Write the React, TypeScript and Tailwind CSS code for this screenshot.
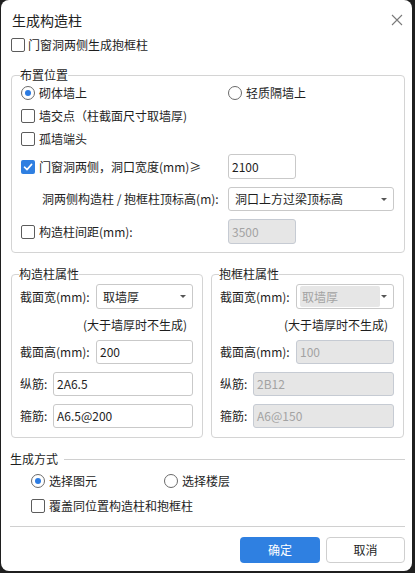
import React from "react";

const font = { fontFamily: '"Noto Sans CJK SC", "Noto Sans", sans-serif' };

function Checkbox({ checked = false }: { checked?: boolean }) {
  if (checked) {
    return (
      <span className="w-[14px] h-[14px] shrink-0 rounded-[2px] bg-[#2f7fe1] flex items-center justify-center">
        <svg width="10" height="10" viewBox="0 0 10 10">
          <path d="M1.5 5.2 L4 7.6 L8.6 2.4" fill="none" stroke="#fff" strokeWidth="1.6" strokeLinecap="round" strokeLinejoin="round" />
        </svg>
      </span>
    );
  }
  return <span className="w-[14px] h-[14px] shrink-0 rounded-[2px] border border-[#5c5c5c] bg-white" />;
}

function Radio({ checked = false }: { checked?: boolean }) {
  return (
    <span className="w-[14px] h-[14px] shrink-0 rounded-full border border-[#6a6a6a] bg-white flex items-center justify-center">
      {checked && <span className="w-[6px] h-[6px] rounded-full bg-[#2b7be2]" />}
    </span>
  );
}

function Arrow() {
  return <span className="w-0 h-0 border-l-[3px] border-r-[3px] border-t-[3px] border-l-transparent border-r-transparent border-t-[#555]" />;
}

function Input({ value, disabled = false, cls }: { value: string; disabled?: boolean; cls: string }) {
  return (
    <div
      className={
        "h-full flex items-center pl-[3px] rounded-[3px] border text-[12px] " +
        (disabled ? "bg-[#e6e6e6] border-[#c6cbd3] text-[#a3a3a3] " : "bg-white border-[#c9c9c9] text-[#1e1e1e] ") +
        cls
      }
    >
      {value}
    </div>
  );
}

function Select({ value, disabled = false, cls }: { value: string; disabled?: boolean; cls: string }) {
  return (
    <div className={"h-full flex items-center justify-between rounded-[3px] border border-[#c9c9c9] bg-white pr-[6px] " + cls}>
      {disabled ? (
        <div className="ml-[3px] h-[21px] w-[80px] rounded-[2px] bg-[#e6e6e6] flex items-center pl-[2px] text-[12px] text-[#a3a3a3]">
          {value}
        </div>
      ) : (
        <span className="pl-[6px] text-[12px] text-[#1e1e1e]">{value}</span>
      )}
      <Arrow />
    </div>
  );
}

export default function App() {
  const legend = "text-[12px] leading-[16px] text-[#1e1e1e] -ml-[1px] px-0";
  return (
    <div className="w-[415px] h-[573px] bg-[#1f1f1f] pl-[1px]" style={font}>
      <div className="w-[411px] h-[571px] bg-white rounded-[8px] flex flex-col pl-[10px] pr-[7px] text-[12px] leading-[16px] text-[#1e1e1e]">
        {/* title */}
        <div className="h-[38px] pt-[2px] flex items-center justify-between pl-[1px] shrink-0">
          <span className="text-[14px] text-[#222]">生成构造柱</span>
          <svg width="12" height="12" viewBox="0 0 12 12" className="mr-[2px]">
            <path d="M1 1 L11 11 M11 1 L1 11" stroke="#7a7a7a" strokeWidth="1.1" />
          </svg>
        </div>

        <div className="h-[14px] flex items-center gap-[3px] shrink-0">
          <Checkbox />
          <span>门窗洞两侧生成抱框柱</span>
        </div>

        {/* 布置位置 */}
        <fieldset className="mt-[15px] border border-[#d4d4d4] rounded-[4px] pl-[9px] pr-[9px] pb-[8px] shrink-0">
          <legend className={legend}>布置位置</legend>
          <div className="mt-[3px] h-[14px] flex items-center">
            <div className="w-[207px] flex items-center gap-[4px]">
              <Radio checked />
              <span>砌体墙上</span>
            </div>
            <div className="flex items-center gap-[4px]">
              <Radio />
              <span>轻质隔墙上</span>
            </div>
          </div>
          <div className="mt-[9px] h-[14px] flex items-center gap-[4px]">
            <Checkbox />
            <span>墙交点（柱截面尺寸取墙厚)</span>
          </div>
          <div className="mt-[9px] h-[14px] flex items-center gap-[4px]">
            <Checkbox />
            <span>孤墙端头</span>
          </div>
          <div className="mt-[8px] h-[25px] flex items-center">
            <div className="w-[207px] flex items-center gap-[4px]">
              <Checkbox checked />
              <span>门窗洞两侧，洞口宽度(mm)≥</span>
            </div>
            <Input value="2100" cls="w-[68px]" />
          </div>
          <div className="mt-[8px] h-[24px] flex items-center">
            <div className="w-[207px] pl-[21px]">洞两侧构造柱 / 抱框柱顶标高(m):</div>
            <Select value="洞口上方过梁顶标高" cls="w-[166px]" />
          </div>
          <div className="mt-[8px] h-[25px] flex items-center">
            <div className="w-[207px] flex items-center gap-[4px]">
              <Checkbox />
              <span>构造柱间距(mm):</span>
            </div>
            <Input value="3500" disabled cls="w-[68px]" />
          </div>
        </fieldset>

        {/* two property groups */}
        <div className="mt-[13px] flex gap-[8px] shrink-0">
          <fieldset className="w-[192px] border border-[#d4d4d4] rounded-[4px] pl-[8px] pr-[9px] pb-[9px]">
            <legend className={legend}>构造柱属性</legend>
            <div className="mt-[2px] h-[25px] flex items-center justify-between">
              <span>截面宽(mm):</span>
              <Select value="取墙厚" cls="w-[97px]" />
            </div>
            <div className="mt-[8px] h-[16px] text-right pr-[6px]">(大于墙厚时不生成)</div>
            <div className="mt-[7px] h-[24px] flex items-center justify-between">
              <span>截面高(mm):</span>
              <Input value="200" cls="w-[97px]" />
            </div>
            <div className="mt-[8px] h-[24px] flex items-center justify-between">
              <span>纵筋:</span>
              <Input value="2A6.5" cls="w-[140px]" />
            </div>
            <div className="mt-[8px] h-[24px] flex items-center justify-between">
              <span>箍筋:</span>
              <Input value="A6.5@200" cls="w-[140px]" />
            </div>
          </fieldset>
          <fieldset className="w-[193px] border border-[#d4d4d4] rounded-[4px] pl-[8px] pr-[9px] pb-[9px]">
            <legend className={legend}>抱框柱属性</legend>
            <div className="mt-[2px] h-[25px] flex items-center justify-between">
              <span>截面宽(mm):</span>
              <Select value="取墙厚" disabled cls="w-[98px]" />
            </div>
            <div className="mt-[8px] h-[16px] text-right pr-[6px]">(大于墙厚时不生成)</div>
            <div className="mt-[7px] h-[24px] flex items-center justify-between">
              <span>截面高(mm):</span>
              <Input value="100" disabled cls="w-[98px]" />
            </div>
            <div className="mt-[8px] h-[24px] flex items-center justify-between">
              <span>纵筋:</span>
              <Input value="2B12" disabled cls="w-[141px]" />
            </div>
            <div className="mt-[8px] h-[24px] flex items-center justify-between">
              <span>箍筋:</span>
              <Input value="A6@150" disabled cls="w-[141px]" />
            </div>
          </fieldset>
        </div>

        {/* 生成方式 */}
        <div className="mt-[13px] h-[16px] flex items-center -ml-[1px] shrink-0">
          <span>生成方式</span>
          <div className="flex-1 h-px bg-[#d0d0d0] ml-[6px]" />
        </div>
        <div className="mt-[7px] h-[14px] flex items-center pl-[20px] shrink-0">
          <div className="w-[133px] flex items-center gap-[4px]">
            <Radio checked />
            <span>选择图元</span>
          </div>
          <div className="flex items-center gap-[4px]">
            <Radio />
            <span>选择楼层</span>
          </div>
        </div>
        <div className="mt-[11px] h-[14px] flex items-center gap-[4px] pl-[20px] shrink-0">
          <Checkbox />
          <span>覆盖同位置构造柱和抱框柱</span>
        </div>
        <div className="mt-[13px] h-px bg-[#d0d0d0] -ml-[1px] shrink-0" />
        <div className="mt-[10px] h-[26px] flex justify-end gap-[6px] shrink-0">
          <button className="w-[80px] h-full rounded-[4px] bg-[#2f80e1] text-white text-[12px]">确定</button>
          <button className="w-[79px] h-full rounded-[4px] bg-white border border-[#cfcfcf] text-[#1e1e1e] text-[12px]">取消</button>
        </div>
      </div>
    </div>
  );
}
